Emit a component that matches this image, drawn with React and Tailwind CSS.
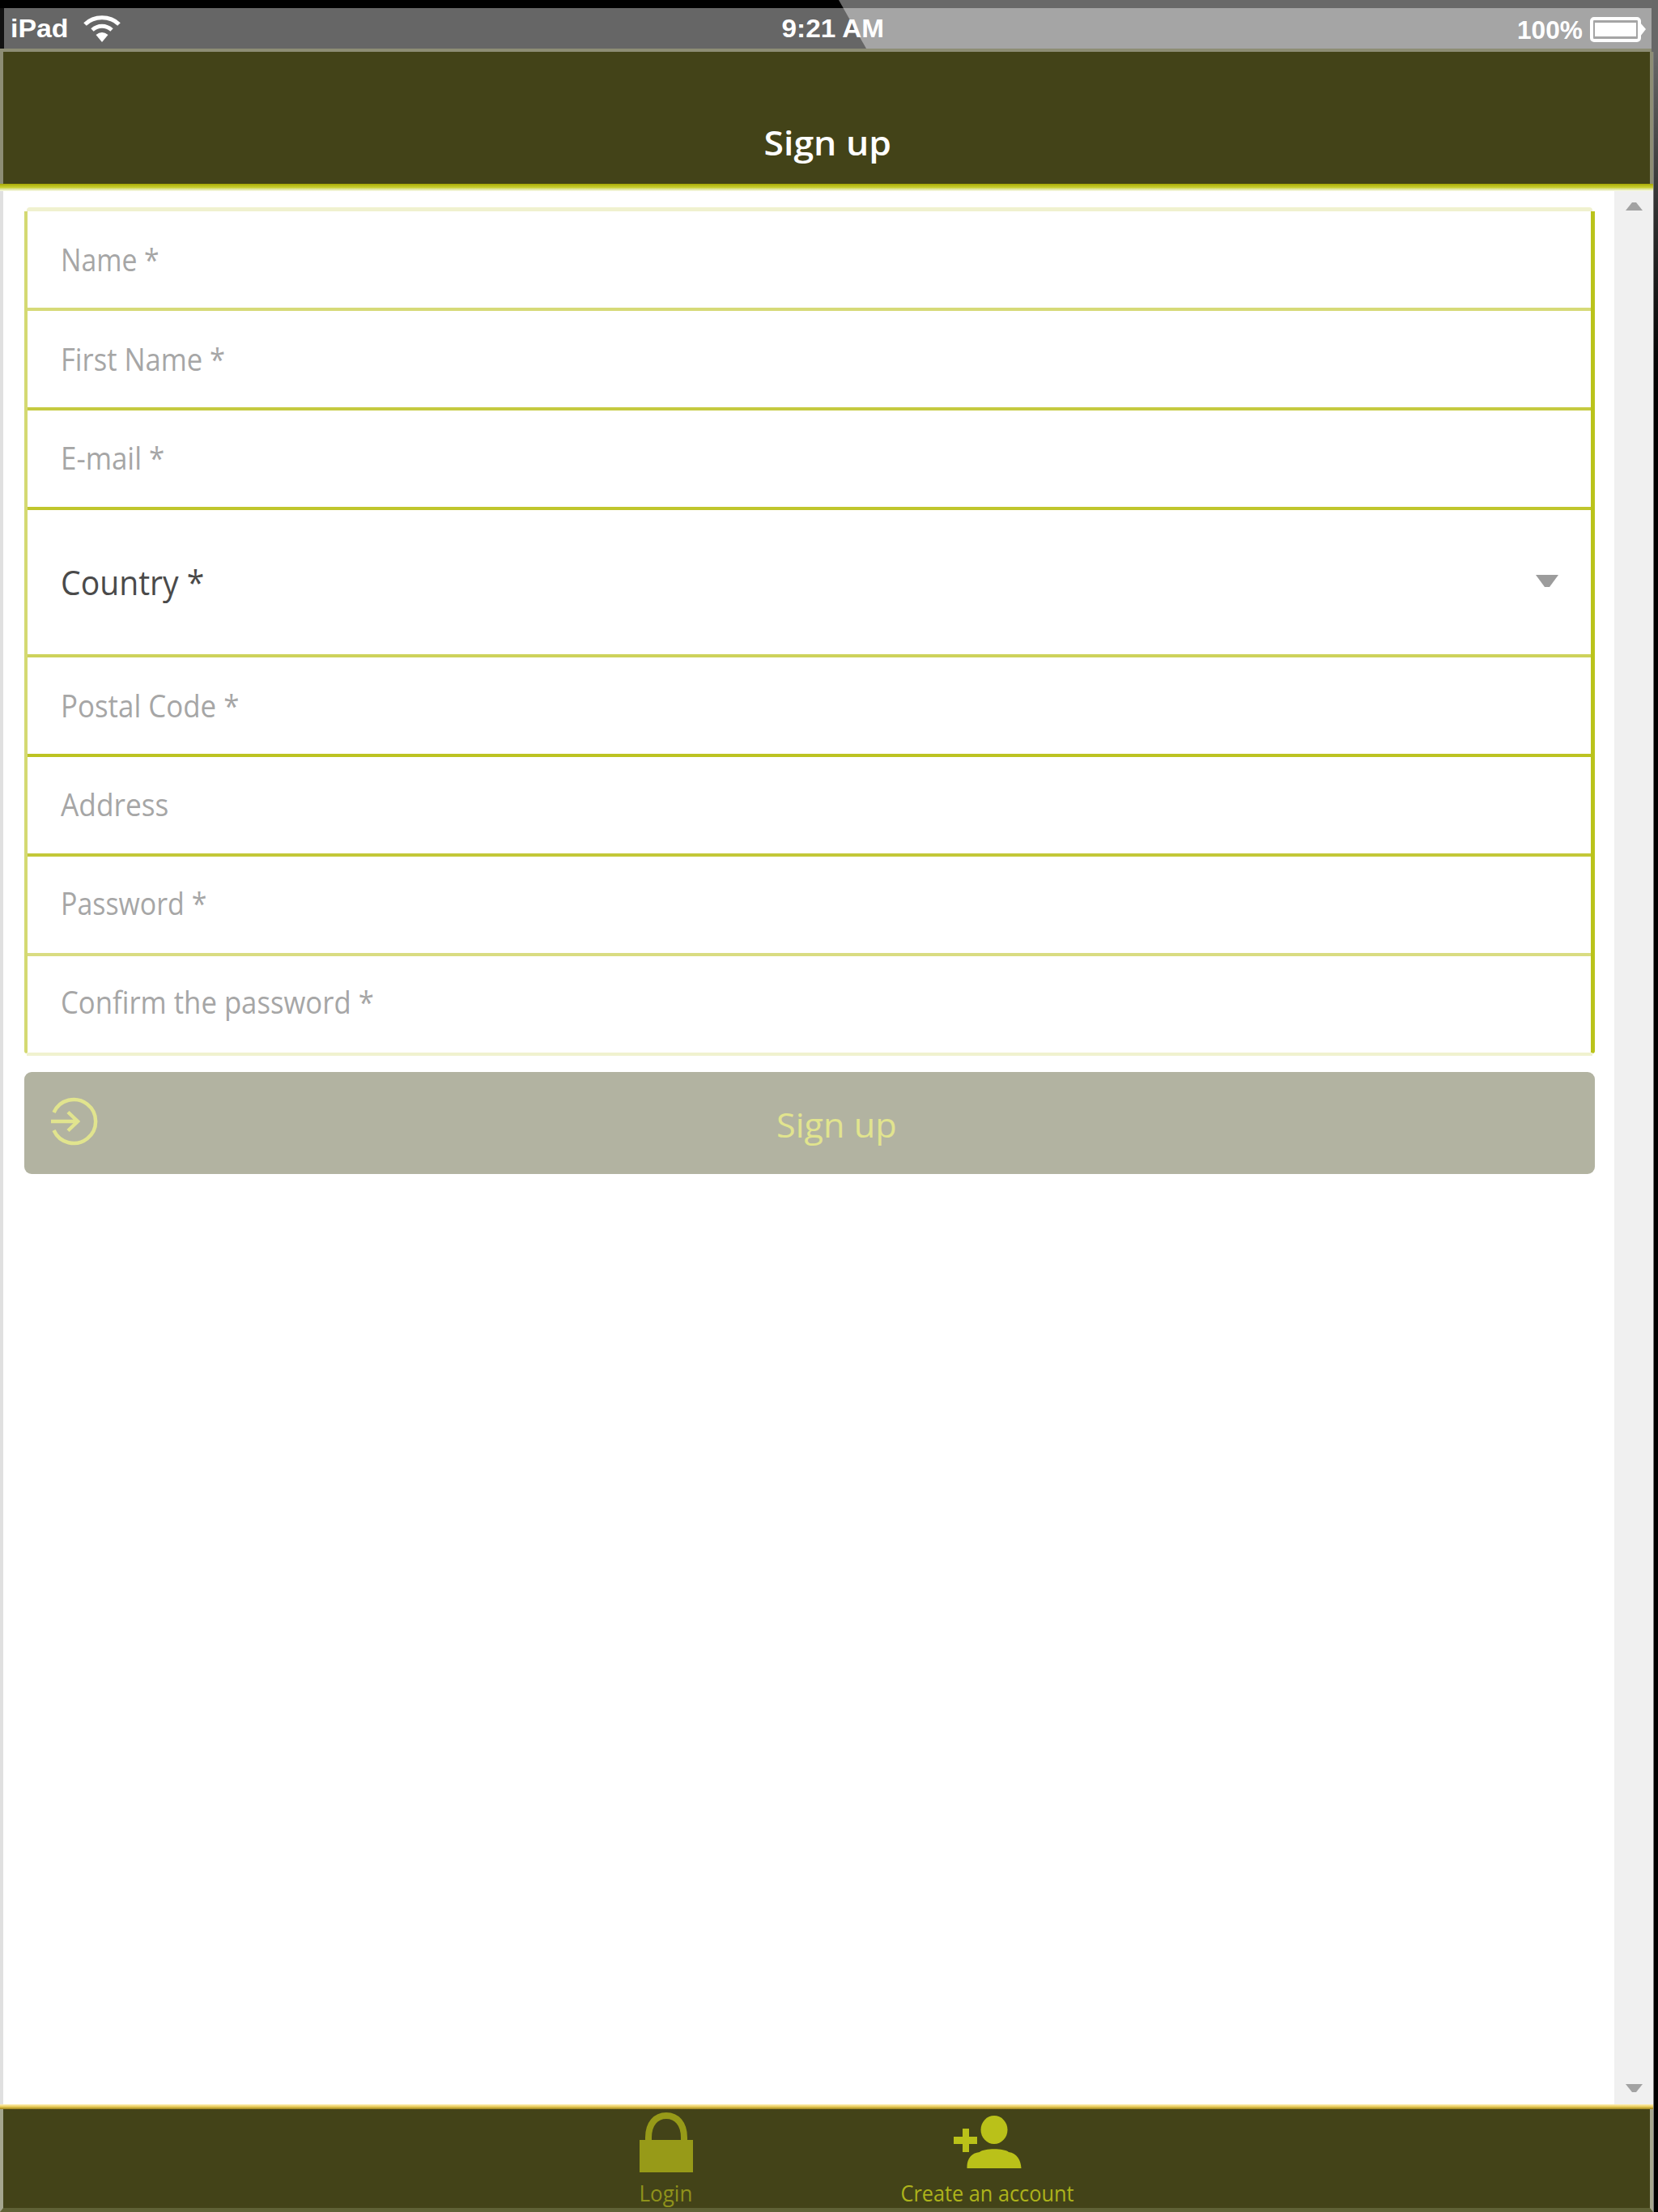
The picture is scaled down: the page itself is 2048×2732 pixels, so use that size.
import { useLayoutEffect, useRef, useState } from "react";

// Single line of text, condensed horizontally to the given width.
function FitText({ width, origin = "origin-left", className = "", children }) {
  const ref = useRef(null);
  const [scale, setScale] = useState(1);
  useLayoutEffect(() => {
    setScale(width / ref.current.offsetWidth);
  }, [width]);
  return (
    <span
      ref={ref}
      className={`inline-block whitespace-nowrap ${origin} ${className}`}
      style={{ transform: `scaleX(${scale})` }}
    >
      {children}
    </span>
  );
}

const fields = [
  { label: "Name *", width: 122, row: "h-[123px] pb-[2px] border-[#d6da78]" },
  { label: "First Name *", width: 203, row: "h-[123px] pb-[3px] border-[#c5ca40]" },
  { label: "E-mail *", width: 128, row: "h-[123px] pb-[4px] border-[#c0c62c]" },
  { label: "Country *", width: 177, row: "h-[182px] border-[#cdd25b]", select: true },
  { label: "Postal Code *", width: 220, row: "h-[123px] pb-[3px] border-[#bcc322]" },
  { label: "Address", width: 133, row: "h-[123px] pb-[4px] border-[#c3c838]" },
  { label: "Password *", width: 180, row: "h-[123px] pb-[7px] border-[#d9dc82]" },
  { label: "Confirm the password *", width: 387, row: "h-[120px] pb-[5px] border-transparent" },
];

function StatusBar() {
  return (
    <div className="relative h-[64px] shrink-0 border-t-10 border-black bg-[#666]">
      <div className="grid h-[50px] grid-cols-[1fr_auto_1fr] items-center border-l-5 border-[#111] pr-[15px] pl-[8px] font-['Liberation_Sans',sans-serif] text-[32px] leading-none font-bold text-white">
        <div className="flex items-center">
          <FitText width={72}>iPad</FitText>
          <svg className="ml-[22px] h-[33px] w-[46px]" viewBox="0 0 46 33" fill="none" stroke="white">
            <path d="M2 11 C13 0 33 0 44 11" strokeWidth="5" />
            <path d="M11 18 C18 11.500 28 11.500 35 18" strokeWidth="5" />
            <path d="M15.500 24 Q23 18 30.500 24 L23 33 Z" fill="white" stroke="none" />
          </svg>
        </div>
        <div className="pl-[12px]">
          <FitText width={127} origin="origin-center">
            9:21 AM
          </FitText>
        </div>
        <div className="flex items-center justify-end gap-[9px]">
          <FitText width={81} origin="origin-right" className="pt-[4px]">
            100%
          </FitText>
          <svg className="mt-[2px] h-[33px] w-[69px]" viewBox="0 0 69 33">
            <rect x="2" y="3" width="59" height="27" rx="3" fill="none" stroke="white" strokeWidth="4" />
            <rect x="6" y="8" width="51" height="17" fill="white" />
            <path d="M62 8 L69 16 L62 25 Z" fill="white" />
          </svg>
        </div>
      </div>
      <div className="h-[4px] bg-[#8d8d75]" />
      <div className="absolute -top-[10px] right-0 h-[60px] w-[1012px] bg-white/41 [clip-path:polygon(0_0,100%_0,100%_100%,34px_100%)]" />
      <div className="absolute -top-[10px] right-0 h-[64px] w-[8px] bg-[#686868]" />
    </div>
  );
}

function Field({ label, width, row, select }) {
  return (
    <div className={`flex items-center justify-between border-b-4 pr-[40px] pl-[41px] ${row}`}>
      <FitText
        width={width}
        className={select ? "text-[42px] leading-none text-[#4a4a4a]" : "text-[39px] leading-none text-[#a6a6a6]"}
      >
        {label}
      </FitText>
      {select && (
        <svg className="mb-[4px] h-[15px] w-[28px]" viewBox="0 0 28 15">
          <path d="M0 0 H28 L17 15 H11 Z" fill="#9c9c9c" />
        </svg>
      )}
    </div>
  );
}

export default function App() {
  return (
    <div className="flex h-[2732px] w-[2048px] flex-col overflow-hidden bg-white font-['Open_Sans','Noto_Sans',sans-serif]">
      <StatusBar />
      <div className="flex min-h-0 flex-1">
        <div className="flex min-w-0 flex-1 flex-col">
          <header className="flex h-[163px] shrink-0 justify-center border-x-4 border-[#8d8d75] bg-[#434318] pt-[88px]">
            <FitText width={158} origin="origin-center" className="translate-x-[1px] text-[42px] leading-[48px] font-semibold text-white">
              Sign up
            </FitText>
          </header>
          <div className="h-[9px] shrink-0 bg-linear-to-b from-[#a8a900] via-[#c9cf30] via-50% to-[#f9faec]" />
          <div className="flex min-h-0 flex-1">
            <main className="flex-1 border-l-4 border-[#e0e0e0] pt-[20px] pr-[24px] pl-[26px]">
              <div className="mx-[3px] h-[5px] rounded-t bg-[#f0f1cf]" />
              <form className="rounded-b-[3px] border-r-5 border-l-4 border-r-[#bac31b] border-l-[#d4d972]">
                {fields.map((field) => (
                  <Field key={field.label} {...field} />
                ))}
              </form>
              <div className="mx-[3px] -mt-px h-[4px] bg-[#f0f2cf]" />
              <button className="relative mt-[20px] flex h-[126px] w-full items-center justify-center rounded-[9px] bg-[#b2b3a1] text-[42px] text-[#e1e48e]">
                <svg
                  className="absolute top-[31px] left-[32px] h-[60px] w-[60px]"
                  viewBox="0 0 60 60"
                  fill="none"
                  stroke="#e1e48e"
                  strokeWidth="4.5"
                >
                  <path d="M4.500 19 A27 27 0 1 1 4.500 41" />
                  <path d="M1 30 H35 M22 18.500 L34 30 L22 41.500" />
                </svg>
                <FitText width={149} origin="origin-center" className="translate-x-[33px] pt-[3px] leading-none">
                  Sign up
                </FitText>
              </button>
            </main>
            <aside className="flex w-[48px] flex-col items-center justify-between bg-[#f0f0f0] pt-[13px] pb-[14px]">
              <svg className="h-[11px] w-[21px]" viewBox="0 0 21 11">
                <path d="M0 11 L8 1 H13 L21 11 Z" fill="#a2a2a2" />
              </svg>
              <svg className="h-[11px] w-[21px]" viewBox="0 0 21 11">
                <path d="M0 0 L8 10 H13 L21 0 Z" fill="#a2a2a2" />
              </svg>
            </aside>
          </div>
          <div className="h-[6px] shrink-0 bg-linear-to-b from-[#fff0b5] via-[#e8cb55] to-[#9b821c]" />
          <nav className="flex h-[127px] shrink-0 border-x-4 border-b-5 border-x-[#a5a68f] border-b-[#5f6135] bg-[#434318] text-[28px] leading-[34px]">
            <div className="ml-[606px] flex w-[425px] flex-col items-center pt-[4px] text-[#8f921b]">
              <svg className="h-[74px] w-[66px]" viewBox="0 0 66 74">
                <path d="M11 38 V31 C11 14 20 4 33 4 S55 14 55 31 V38" fill="none" stroke="#979a18" strokeWidth="8" />
                <path d="M0 34 H66 V74 H0 Z" fill="#979a18" />
              </svg>
              <FitText width={66} origin="origin-center" className="mt-[8px]">
                Login
              </FitText>
            </div>
            <div className="-ml-[28px] flex w-[425px] flex-col items-center pt-[8px] text-[#adb31b]">
              <svg className="h-[66px] w-[84px]" viewBox="0 0 84 66" fill="#bac119">
                <ellipse cx="50" cy="17.500" rx="16.500" ry="17.500" />
                <path d="M16.500 65 V62 C17 53 22 46 32 45 C38 40 62 40 68 45 C78 46 83 55 83.500 65 Z" />
                <path d="M11 16 H19 V26 H29 V35 H19 V45 H11 V35 H0 V26 H11 Z" />
              </svg>
              <FitText width={214} origin="origin-center" className="mt-[12px]">
                Create an account
              </FitText>
            </div>
          </nav>
        </div>
        <div className="w-[6px] shrink-0 border-l border-[#777] bg-linear-to-b from-[#686868] to-black to-[500px]" />
      </div>
    </div>
  );
}
